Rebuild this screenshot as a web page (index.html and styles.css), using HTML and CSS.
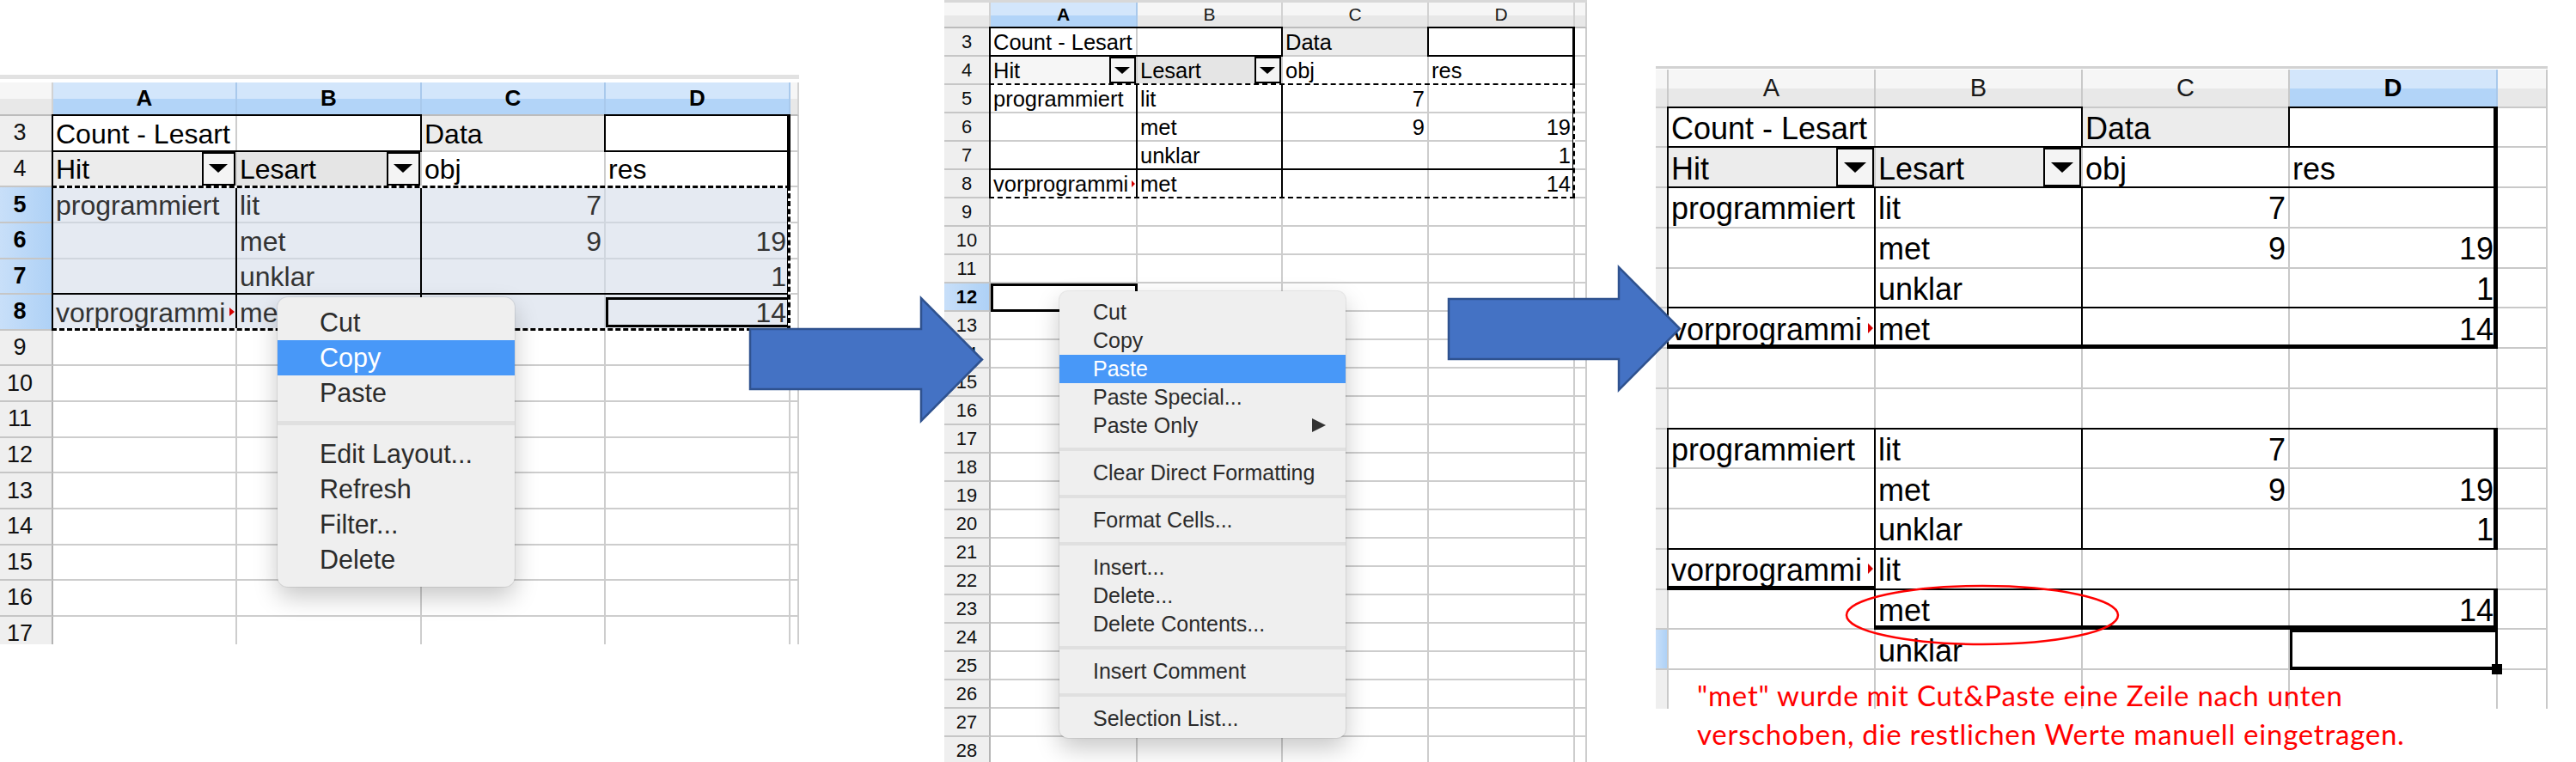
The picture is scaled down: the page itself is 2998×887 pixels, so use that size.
FILE: index.html
```html
<!DOCTYPE html>
<html lang="de">
<head>
<meta charset="utf-8">
<title>Pivot-Tabelle: Cut &amp; Paste</title>
<link rel="stylesheet" href="styles.css">
</head>
<body>

<section class="panel p1">
  <div class="topline"></div>
  <div class="sheet">
    <div class="hd"></div><div class="hd s">A</div><div class="hd s">B</div><div class="hd s">C</div><div class="hd s">D</div><div class="hd"></div>
    <div class="rh">3</div><div>Count - Lesart</div><i></i><div class="f">Data</div><i></i><i></i>
    <div class="rh">4</div><div class="f">Hit<span class="dd"></span></div><div class="f dk">Lesart<span class="dd"></span></div><div>obj</div><div>res</div><i></i>
    <div class="rh s">5</div><div class="t">programmiert</div><div class="t">lit</div><div class="t n">7</div><i class="t"></i><i></i>
    <div class="rh s">6</div><i class="t"></i><div class="t">met</div><div class="t n">9</div><div class="t n">19</div><i></i>
    <div class="rh s">7</div><i class="t"></i><div class="t">unklar</div><i class="t"></i><div class="t n">1</div><i></i>
    <div class="rh s">8</div><div class="t ovf">vorprogrammi</div><div class="t">met</div><i class="t"></i><div class="t n">14</div><i></i>
    <div class="rh">9</div><i></i><i></i><i></i><i></i><i></i>
    <div class="rh">10</div><i></i><i></i><i></i><i></i><i></i>
    <div class="rh">11</div><i></i><i></i><i></i><i></i><i></i>
    <div class="rh">12</div><i></i><i></i><i></i><i></i><i></i>
    <div class="rh">13</div><i></i><i></i><i></i><i></i><i></i>
    <div class="rh">14</div><i></i><i></i><i></i><i></i><i></i>
    <div class="rh">15</div><i></i><i></i><i></i><i></i><i></i>
    <div class="rh">16</div><i></i><i></i><i></i><i></i><i></i>
    <div class="rh">17</div><i></i><i></i><i></i><i></i><i></i>

    <span class="bx g-3to8 l2 R4 B3"></span>
    <span class="bx g-a3b3 t2 l2 r2 b2"></span>
    <span class="bx g-d3 t2 l2 b2 R4"></span>
    <span class="bx g-b5b8 l2 r2"></span>
    <span class="bx g-r8 t2"></span>
    <span class="bx cur g-d8"></span>
    <span class="bx mq g-5to8"></span>
  </div>
</section>

<div class="menu m1">
  <div class="mi">Cut</div>
  <div class="mi hl">Copy</div>
  <div class="mi">Paste</div>
  <div class="sep"></div>
  <div class="mi">Edit Layout...</div>
  <div class="mi">Refresh</div>
  <div class="mi">Filter...</div>
  <div class="mi">Delete</div>
</div>

<section class="panel p2">
  <div class="topline"></div>
  <div class="sheet">
    <div class="hd"></div><div class="hd s">A</div><div class="hd">B</div><div class="hd">C</div><div class="hd">D</div><div class="hd"></div>
    <div class="rh">3</div><div>Count - Lesart</div><i></i><div class="f">Data</div><i></i><i></i>
    <div class="rh">4</div><div class="f lt">Hit<span class="dd"></span></div><div class="f dk">Lesart<span class="dd"></span></div><div>obj</div><div>res</div><i></i>
    <div class="rh">5</div><div>programmiert</div><div>lit</div><div class="n">7</div><i></i><i></i>
    <div class="rh">6</div><i></i><div>met</div><div class="n">9</div><div class="n">19</div><i></i>
    <div class="rh">7</div><i></i><div>unklar</div><i></i><div class="n">1</div><i></i>
    <div class="rh">8</div><div class="ovf">vorprogrammi</div><div>met</div><i></i><div class="n">14</div><i></i>
    <div class="rh">9</div><i></i><i></i><i></i><i></i><i></i>
    <div class="rh">10</div><i></i><i></i><i></i><i></i><i></i>
    <div class="rh">11</div><i></i><i></i><i></i><i></i><i></i>
    <div class="rh s">12</div><i></i><i></i><i></i><i></i><i></i>
    <div class="rh">13</div><i></i><i></i><i></i><i></i><i></i>
    <div class="rh">14</div><i></i><i></i><i></i><i></i><i></i>
    <div class="rh">15</div><i></i><i></i><i></i><i></i><i></i>
    <div class="rh">16</div><i></i><i></i><i></i><i></i><i></i>
    <div class="rh">17</div><i></i><i></i><i></i><i></i><i></i>
    <div class="rh">18</div><i></i><i></i><i></i><i></i><i></i>
    <div class="rh">19</div><i></i><i></i><i></i><i></i><i></i>
    <div class="rh">20</div><i></i><i></i><i></i><i></i><i></i>
    <div class="rh">21</div><i></i><i></i><i></i><i></i><i></i>
    <div class="rh">22</div><i></i><i></i><i></i><i></i><i></i>
    <div class="rh">23</div><i></i><i></i><i></i><i></i><i></i>
    <div class="rh">24</div><i></i><i></i><i></i><i></i><i></i>
    <div class="rh">25</div><i></i><i></i><i></i><i></i><i></i>
    <div class="rh">26</div><i></i><i></i><i></i><i></i><i></i>
    <div class="rh">27</div><i></i><i></i><i></i><i></i><i></i>
    <div class="rh">28</div><i></i><i></i><i></i><i></i><i></i>

    <span class="bx g-3to8 l2 R3 b2"></span>
    <span class="bx g-a3b3 t2 l2 r2 b2"></span>
    <span class="bx g-d3 t2 l2 b2 R3"></span>
    <span class="bx g-b5b8 l2 r2"></span>
    <span class="bx g-r8 t2"></span>
    <span class="bx mq g-5to8"></span>
    <span class="bx cur g-a12"></span>
  </div>
</section>

<div class="menu m2">
  <div class="mi">Cut</div>
  <div class="mi">Copy</div>
  <div class="mi hl">Paste</div>
  <div class="mi">Paste Special...</div>
  <div class="mi">Paste Only<span class="sub"></span></div>
  <div class="sep"></div>
  <div class="mi">Clear Direct Formatting</div>
  <div class="sep"></div>
  <div class="mi">Format Cells...</div>
  <div class="sep"></div>
  <div class="mi">Insert...</div>
  <div class="mi">Delete...</div>
  <div class="mi">Delete Contents...</div>
  <div class="sep"></div>
  <div class="mi">Insert Comment</div>
  <div class="sep"></div>
  <div class="mi">Selection List...</div>
</div>

<section class="panel p3">
  <div class="topline"></div>
  <div class="sheet">
    <div class="hd"></div><div class="hd">A</div><div class="hd">B</div><div class="hd">C</div><div class="hd s">D</div><div class="hd"></div>
    <div class="rh"></div><div>Count - Lesart</div><i></i><div class="f">Data</div><i></i><i></i>
    <div class="rh"></div><div class="f">Hit<span class="dd"></span></div><div class="f">Lesart<span class="dd"></span></div><div>obj</div><div>res</div><i></i>
    <div class="rh"></div><div>programmiert</div><div>lit</div><div class="n">7</div><i></i><i></i>
    <div class="rh"></div><i></i><div>met</div><div class="n">9</div><div class="n">19</div><i></i>
    <div class="rh"></div><i></i><div>unklar</div><i></i><div class="n">1</div><i></i>
    <div class="rh"></div><div class="ovf">vorprogrammi</div><div>met</div><i></i><div class="n">14</div><i></i>
    <div class="rh"></div><i></i><i></i><i></i><i></i><i></i>
    <div class="rh"></div><i></i><i></i><i></i><i></i><i></i>
    <div class="rh"></div><div>programmiert</div><div>lit</div><div class="n">7</div><i></i><i></i>
    <div class="rh"></div><i></i><div>met</div><div class="n">9</div><div class="n">19</div><i></i>
    <div class="rh"></div><i></i><div>unklar</div><i></i><div class="n">1</div><i></i>
    <div class="rh"></div><div class="ovf">vorprogrammi</div><div>lit</div><i></i><i></i><i></i>
    <div class="rh"></div><i></i><div>met</div><i></i><div class="n">14</div><i></i>
    <div class="rh s"></div><i></i><div>unklar</div><i></i><i></i><i></i>
    <div class="rh"></div><i></i><i></i><i></i><i></i><i></i>

    <span class="bx g-3to8 l2 R5 B5"></span>
    <span class="bx g-a3b3 t2 l2 r2 b2"></span>
    <span class="bx g-d3 t2 l2 b2 R5"></span>
    <span class="bx g-r4 t2 b2"></span>
    <span class="bx g-b5b8 l2 r2"></span>
    <span class="bx g-r8 t2"></span>

    <span class="bx g-11to13 t2 l2 R5 b2"></span>
    <span class="bx g-b11b15 l2"></span>
    <span class="bx g-b11b13 r2"></span>
    <span class="bx g-a14 l2 B5"></span>
    <span class="bx g-b15d15 t2 l2 R5 B5"></span>
    <span class="bx g-b15 r2"></span>
    <span class="bx cur fh g-d16"></span>
  </div>
</section>

<svg class="overlay" width="2998" height="887" viewBox="0 0 2998 887" aria-hidden="true">
  <polygon points="873,383 1072,383 1072,347 1143,418.5 1072,490 1072,453 873,453" fill="#4472c4" stroke="#2f528f" stroke-width="2.5"/>
  <polygon points="1686,348 1884,348 1884,311 1955,382.5 1884,454 1884,418 1686,418" fill="#4472c4" stroke="#2f528f" stroke-width="2.5"/>
  <ellipse cx="2307" cy="716" rx="158" ry="34" fill="none" stroke="#ff0000" stroke-width="2.5"/>
</svg>

<p class="note">"met" wurde mit Cut&amp;Paste eine Zeile nach unten<br>verschoben, die restlichen Werte manuell eingetragen.</p>

</body>
</html>
```

FILE: styles.css
```css
* { box-sizing: border-box; margin: 0; padding: 0; }
html, body { width: 2998px; height: 887px; }
body {
  position: relative;
  overflow: hidden;
  background: #fff;
  color: #000;
  font-family: "Liberation Sans", Arial, sans-serif;
}

/* ---------- panels (screenshots placed on the slide canvas) ---------- */
.panel {
  position: absolute;
  z-index: 1;
  overflow: hidden;
  display: flex;
  flex-direction: column;
  background: #fff;
}
.p1 { left: 0; top: 87px; width: 930px; height: 663px; --g: 2px; --fs: 32px; --hfs: 26px; --rfs: 27px; }
.p2 { left: 1099px; top: 0; width: 748px; height: 887px; --g: 2px; --fs: 25.5px; --hfs: 21px; --rfs: 22px; }
.p3 { left: 1927px; top: 77px; width: 1038px; height: 748px; --g: 2px; --fs: 36px; --hfs: 29px; --rfs: 29px; }

.topline { flex: none; background: #e2e2e2; }
.p1 .topline { height: 5px; margin-bottom: 4px; }
.p2 .topline { height: 3px; background: #d8d8d8; }
.p3 .topline { height: 3px; margin-bottom: 1px; background: #d2d2d2; }

/* ---------- spreadsheet grid ---------- */
.sheet {
  flex: none;
  display: grid;
  position: relative;
  font-size: var(--fs);
}
.p1 .sheet { grid-template-columns: 62px 214px 215px 214px 215px 10px; grid-template-rows: 39px repeat(15, 41.64px); }
.p2 .sheet { grid-template-columns: 54px 171px 169px 170px 170px 14px; grid-template-rows: 30px repeat(26, 33px); }
.p3 .sheet { grid-template-columns: 15px 241px 241px 241px 242px 58px; grid-template-rows: 44.5px repeat(15, 46.75px); }

.sheet > div, .sheet > i {
  display: flex;
  align-items: flex-end;
  min-width: 0;
  padding: 0 3px;
  border-right: var(--g) solid #cdcdcd;
  border-bottom: var(--g) solid #cdcdcd;
  white-space: nowrap;
  overflow: hidden;
  line-height: 1.15;
  font-style: normal;
}
.p3 .sheet > div, .p3 .sheet > i { border-color: #c9c9c9; }

.sheet > .n { justify-content: flex-end; }
.sheet > .t { background: #e5eaf2; color: #333; border-color: #d0d6de; }
.sheet > .f { background: #ececec; }
.sheet > .f.dk { background: #e5e5e5; }
.sheet > .f.lt { background: #f6f6f6; }

/* column headers */
.sheet > .hd {
  align-items: center;
  justify-content: center;
  font-size: var(--hfs);
  color: #1a1a1a;
  background: linear-gradient(#f6f6f6 0 52%, #e8e8e8 52%);
  border-right-color: #d2d2d2;
  border-bottom-color: #bcbcbc;
}
.sheet > .hd.s {
  font-weight: bold;
  color: #000;
  background: linear-gradient(#d3e6fb 0 52%, #b2d4f8 52%);
  border-right-color: #a9c9ec;
}

/* row headers */
.sheet > .rh {
  align-items: center;
  justify-content: center;
  font-size: var(--rfs);
  color: #111;
  background: #efefef;
  border-right-color: #b4b4b4;
  border-bottom-color: #c6c6c6;
}
.p1 .sheet > .rh { padding-right: 17px; }
.sheet > .rh.s {
  font-weight: bold;
  color: #000;
  background: linear-gradient(90deg, #c8dff9, #aed1f6);
}

/* pivot field dropdown button */
.dd {
  flex: none;
  align-self: stretch;
  margin-left: auto;
  margin-right: -3px;
  width: 1.22em;
  border: 2px solid #000;
  background: #f4f4f4;
  display: flex;
  align-items: center;
  justify-content: center;
}
.dd::after {
  content: "";
  border-left: 0.37em solid transparent;
  border-right: 0.37em solid transparent;
  border-top: 0.34em solid #000;
}

/* text overflow marker */
.sheet > .ovf { position: relative; }
.ovf::after {
  content: "";
  position: absolute;
  right: 1px;
  top: 50%;
  transform: translateY(-50%);
  border-left: 0.19em solid #d40000;
  border-top: 0.17em solid transparent;
  border-bottom: 0.17em solid transparent;
}

/* ---------- border overlays placed on grid areas ---------- */
.sheet > .bx {
  position: absolute;
  top: calc(-1 * var(--g));
  left: calc(-1 * var(--g));
  right: 0;
  bottom: 0;
  z-index: 2;
  pointer-events: none;
}
.t2 { border-top: 2px solid #000; }
.l2 { border-left: 2px solid #000; }
.r2 { border-right: 2px solid #000; }
.b2 { border-bottom: 2px solid #000; }
.R3 { border-right: 3px solid #000; }
.R4 { border-right: 4px solid #000; }
.R5 { border-right: 5px solid #000; }
.B3 { border-bottom: 3px solid #000; }
.B5 { border-bottom: 5px solid #000; }

.g-a3b3   { grid-area: 2 / 2 / 3 / 4; }
.g-d3     { grid-area: 2 / 5 / 3 / 6; }
.g-r4     { grid-area: 3 / 2 / 4 / 6; }
.g-3to8   { grid-area: 2 / 2 / 8 / 6; }
.g-5to8   { grid-area: 4 / 2 / 8 / 6; }
.g-b5b8   { grid-area: 4 / 3 / 8 / 4; }
.g-r8     { grid-area: 7 / 2 / 8 / 6; }
.g-d8     { grid-area: 7 / 5 / 8 / 6; }
.g-a12    { grid-area: 11 / 2 / 12 / 3; }
.g-11to13 { grid-area: 10 / 2 / 13 / 6; }
.g-b11b15 { grid-area: 10 / 3 / 15 / 4; }
.g-b11b13 { grid-area: 10 / 3 / 13 / 4; }
.g-a14    { grid-area: 13 / 2 / 14 / 3; }
.g-b15d15 { grid-area: 14 / 3 / 15 / 6; }
.g-b15    { grid-area: 14 / 3 / 15 / 4; }
.g-d16    { grid-area: 15 / 5 / 16 / 6; }

/* cell cursor */
.sheet > .cur { z-index: 3; border: 3px solid #000; }
.p1 .sheet > .cur { top: 3px; left: 0; right: 0; bottom: 4px; }
.p2 .sheet > .cur { top: 0; left: 0; right: 0; bottom: 0; }
.p3 .sheet > .cur { top: 0; left: 0; right: 0; bottom: 0; border-bottom-width: 4px; }
.fh::after {
  content: "";
  position: absolute;
  right: -8px;
  bottom: -9px;
  width: 12px;
  height: 12px;
  background: #000;
}

/* copy marquee (marching ants) */
.sheet > .mq { z-index: 4; border: 3px solid #fff; border-left: 0; }
.mq::before {
  content: "";
  position: absolute;
  top: -3px; right: -3px; bottom: -3px; left: 0;
  border: 3px dashed #000;
  border-left: 0;
}
.p2 .sheet > .mq { border-width: 2px; border-left: 0; }
.p2 .mq::before { top: -2px; right: -2px; bottom: -2px; border-width: 2px; border-left: 0; }

/* ---------- context menus ---------- */
.menu {
  position: absolute;
  z-index: 5;
  display: flex;
  flex-direction: column;
  background: #efefef;
  color: #2b2b2b;
  box-shadow: 0 12px 28px rgba(0, 0, 0, 0.22), 0 0 0 1px rgba(0, 0, 0, 0.07);
}
.m1 { left: 323px; top: 346px; width: 276px; height: 337px; border-radius: 12px; padding: 8.5px 0 11px; font-size: 30.5px; --ih: 41px; --sh: 30px; --pl: 49px; --sl: 5px; }
.m2 { left: 1233px; top: 339px; width: 333px; height: 520px; border-radius: 10px; padding: 7.5px 0 6.5px; font-size: 25px; --ih: 33px; --sh: 22px; --pl: 39px; --sl: 4px; }
.mi {
  flex: none;
  height: var(--ih);
  padding-left: var(--pl);
  display: flex;
  align-items: center;
  white-space: nowrap;
}
.mi.hl { background: #4898f8; color: #fff; }
.sep { flex: none; height: var(--sh); display: flex; align-items: center; }
.sep::before { content: ""; flex: 1; height: var(--sl); background: #e0e0e0; }
.sub {
  margin-left: auto;
  margin-right: 23px;
  border-left: 16px solid #333;
  border-top: 8px solid transparent;
  border-bottom: 8px solid transparent;
}

/* ---------- arrows, ellipse, annotation ---------- */
.overlay { position: absolute; left: 0; top: 0; z-index: 6; pointer-events: none; }
.note {
  position: absolute;
  z-index: 6;
  left: 1975px;
  top: 787px;
  color: #ff0000;
  font-family: Lato, "Liberation Sans", sans-serif;
  font-size: 33px;
  line-height: 45px;
  letter-spacing: 0.75px;
  white-space: nowrap;
}
```
